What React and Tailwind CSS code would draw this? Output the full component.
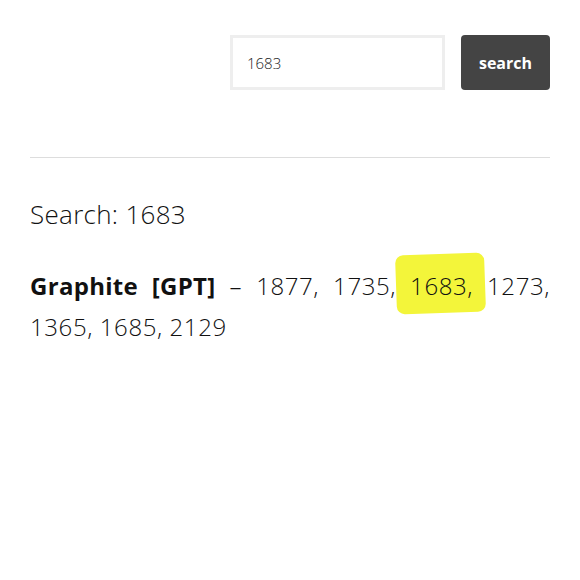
import React from 'react';

const App = () => {
  return (
    <div className="w-[580px] h-[580px] bg-white px-[30px] pt-[35px] text-[#111]" style={{ fontFamily: '"Open Sans", Lato, sans-serif' }}>
      <form className="flex justify-end gap-4" onSubmit={(e) => e.preventDefault()}>
        <input
          type="text"
          defaultValue="1683"
          className="w-[215px] h-[55px] border-[3px] border-[#eeeeee] px-[14px] text-[15px] font-light text-[#222] outline-none"
        />
        <button
          type="submit"
          className="w-[89px] h-[55px] rounded-[4px] bg-[#444444] text-white text-[16px] font-bold"
        >
          search
        </button>
      </form>

      <hr className="mt-[67px] border-t border-[#dddddd]" />

      <h1 className="mt-[38px] text-[26px] font-light leading-[36px] tracking-[0.3px]">Search: 1683</h1>

      <div className="mt-[33px] text-[24px] font-light leading-[41px] tracking-[0.6px]">
        <div className="text-justify [text-align-last:justify]">
          <strong className="font-bold tracking-[0.3px]">Graphite [GPT]</strong> – 1877, 1735,{' '}
          <span className="relative inline-block">
            <span className="absolute left-[-14px] right-[-12px] top-[-11px] bottom-[-7px] rounded-[8px] bg-[#f3f53a] -rotate-2"></span>
            <span className="relative">1683,</span>
          </span>{' '}
          1273,
        </div>
        <div>1365, 1685, 2129</div>
      </div>
    </div>
  );
};

export default App;
